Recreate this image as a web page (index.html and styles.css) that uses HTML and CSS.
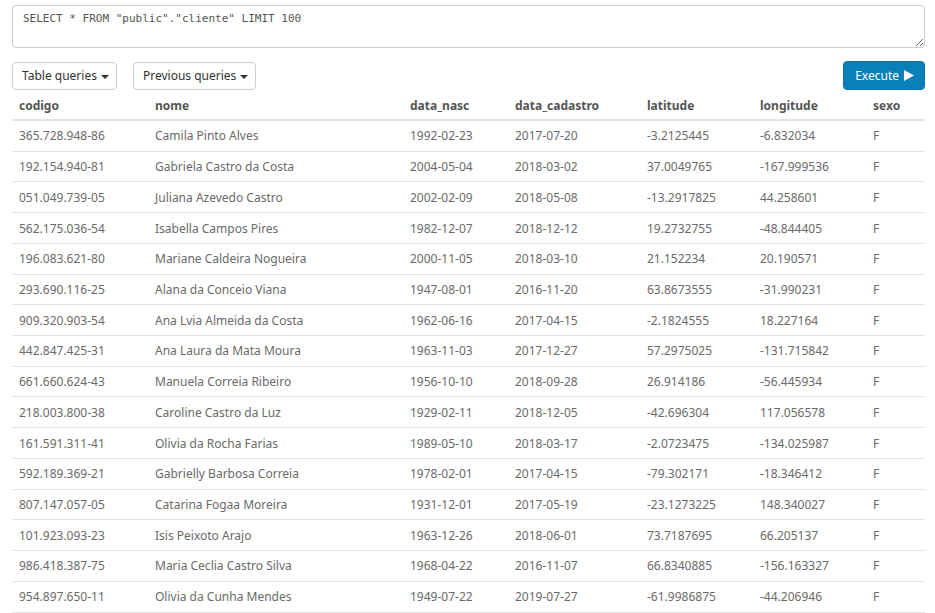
FILE: index.html
```html
<!DOCTYPE html>
<html>
<head>
<meta charset="utf-8">
<link rel="stylesheet" href="styles.css">
</head>
<body>
<div class="page">
  <textarea class="sql">SELECT * FROM "public"."cliente" LIMIT 100</textarea>
  <div class="toolbar">
    <div class="left">
      <button class="btn">Table queries <span class="caret"></span></button>
      <button class="btn">Previous queries <span class="caret"></span></button>
    </div>
    <button class="btn primary">Execute <svg class="play" width="10" height="11" viewBox="0 0 10 11"><path d="M0 0 L10 5.5 L0 11 Z" fill="#fff"/></svg></button>
  </div>
  <table class="grid">
    <colgroup>
      <col style="width:136px"><col style="width:255px"><col style="width:105px"><col style="width:132px"><col style="width:113px"><col style="width:113px"><col style="width:59px">
    </colgroup>
    <thead>
      <tr><th>codigo</th><th>nome</th><th>data_nasc</th><th>data_cadastro</th><th>latitude</th><th>longitude</th><th>sexo</th></tr>
    </thead>
    <tbody>
      <tr><td>365.728.948-86</td><td>Camila Pinto Alves</td><td>1992-02-23</td><td>2017-07-20</td><td>-3.2125445</td><td>-6.832034</td><td>F</td></tr>
      <tr><td>192.154.940-81</td><td>Gabriela Castro da Costa</td><td>2004-05-04</td><td>2018-03-02</td><td>37.0049765</td><td>-167.999536</td><td>F</td></tr>
      <tr><td>051.049.739-05</td><td>Juliana Azevedo Castro</td><td>2002-02-09</td><td>2018-05-08</td><td>-13.2917825</td><td>44.258601</td><td>F</td></tr>
      <tr><td>562.175.036-54</td><td>Isabella Campos Pires</td><td>1982-12-07</td><td>2018-12-12</td><td>19.2732755</td><td>-48.844405</td><td>F</td></tr>
      <tr><td>196.083.621-80</td><td>Mariane Caldeira Nogueira</td><td>2000-11-05</td><td>2018-03-10</td><td>21.152234</td><td>20.190571</td><td>F</td></tr>
      <tr><td>293.690.116-25</td><td>Alana da Conceio Viana</td><td>1947-08-01</td><td>2016-11-20</td><td>63.8673555</td><td>-31.990231</td><td>F</td></tr>
      <tr><td>909.320.903-54</td><td>Ana Lvia Almeida da Costa</td><td>1962-06-16</td><td>2017-04-15</td><td>-2.1824555</td><td>18.227164</td><td>F</td></tr>
      <tr><td>442.847.425-31</td><td>Ana Laura da Mata Moura</td><td>1963-11-03</td><td>2017-12-27</td><td>57.2975025</td><td>-131.715842</td><td>F</td></tr>
      <tr><td>661.660.624-43</td><td>Manuela Correia Ribeiro</td><td>1956-10-10</td><td>2018-09-28</td><td>26.914186</td><td>-56.445934</td><td>F</td></tr>
      <tr><td>218.003.800-38</td><td>Caroline Castro da Luz</td><td>1929-02-11</td><td>2018-12-05</td><td>-42.696304</td><td>117.056578</td><td>F</td></tr>
      <tr><td>161.591.311-41</td><td>Olivia da Rocha Farias</td><td>1989-05-10</td><td>2018-03-17</td><td>-2.0723475</td><td>-134.025987</td><td>F</td></tr>
      <tr><td>592.189.369-21</td><td>Gabrielly Barbosa Correia</td><td>1978-02-01</td><td>2017-04-15</td><td>-79.302171</td><td>-18.346412</td><td>F</td></tr>
      <tr><td>807.147.057-05</td><td>Catarina Fogaa Moreira</td><td>1931-12-01</td><td>2017-05-19</td><td>-23.1273225</td><td>148.340027</td><td>F</td></tr>
      <tr><td>101.923.093-23</td><td>Isis Peixoto Arajo</td><td>1963-12-26</td><td>2018-06-01</td><td>73.7187695</td><td>66.205137</td><td>F</td></tr>
      <tr><td>986.418.387-75</td><td>Maria Ceclia Castro Silva</td><td>1968-04-22</td><td>2016-11-07</td><td>66.8340885</td><td>-156.163327</td><td>F</td></tr>
      <tr><td>954.897.650-11</td><td>Olivia da Cunha Mendes</td><td>1949-07-22</td><td>2019-07-27</td><td>-61.9986875</td><td>-44.206946</td><td>F</td></tr>
    </tbody>
  </table>
</div>
</body>
</html>
```
FILE: styles.css
```css
html, body {
  margin: 0;
  padding: 0;
  background: #fff;
}
body {
  font-family: "Noto Sans", "Open Sans", sans-serif;
  font-size: 12px;
  color: #6a6a6a;
}
.page {
  padding: 5px 10px 0 12px;
}
.sql {
  display: block;
  box-sizing: border-box;
  width: 913px;
  height: 43px;
  margin: 0;
  padding: 6px 10px;
  border: 1px solid #ccc;
  border-radius: 4px;
  font-family: "DejaVu Sans Mono", "Liberation Mono", monospace;
  font-size: 11px;
  color: #555;
  resize: vertical;
  outline: none;
}
.toolbar {
  display: flex;
  justify-content: space-between;
  align-items: center;
  width: 913px;
  margin-top: 13px;
}
.left {
  display: flex;
  gap: 16px;
}
.btn {
  box-sizing: border-box;
  height: 28px;
  padding: 0 7px 0 9px;
  border: 1px solid #ccc;
  border-radius: 4px;
  background: #fff;
  font-family: "Noto Sans", "Open Sans", sans-serif;
  font-size: 12px;
  color: #333;
  display: inline-flex;
  align-items: center;
  gap: 4px;
}
.caret {
  display: inline-block;
  width: 0;
  height: 0;
  border-top: 4px solid #333;
  border-left: 4px solid transparent;
  border-right: 4px solid transparent;
  margin-top: 2px;
}
.btn.primary {
  background: #0a80b8;
  border-color: #0d73a6;
  color: #fff;
  height: 29px;
  padding: 0 10px 0 11px;
  gap: 5px;
}
.play {
  display: block;
}
.grid {
  width: 913px;
  border-collapse: collapse;
  table-layout: fixed;
  margin-top: 1px;
}
.grid th {
  text-align: left;
  font-weight: bold;
  color: #555;
  height: 28px;
  padding: 0 7px;
  border-bottom: 2px solid #e5e5e5;
  white-space: nowrap;
}
.grid td {
  height: 29.73px;
  padding: 0 7px;
  border-bottom: 1px solid #e2e2e2;
  white-space: nowrap;
  overflow: hidden;
}
```
